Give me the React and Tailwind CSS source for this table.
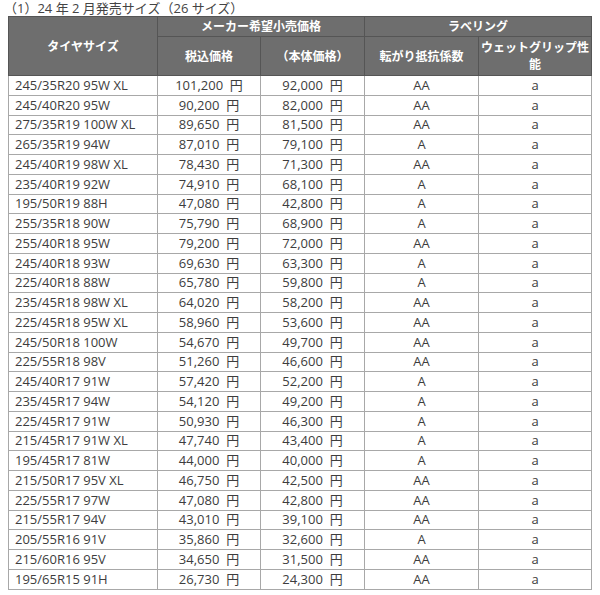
const rows = [
  ['245/35R20 95W XL', '101,200', '92,000', 'AA'],
  ['245/40R20 95W', '90,200', '82,000', 'AA'],
  ['275/35R19 100W XL', '89,650', '81,500', 'AA'],
  ['265/35R19 94W', '87,010', '79,100', 'A'],
  ['245/40R19 98W XL', '78,430', '71,300', 'AA'],
  ['235/40R19 92W', '74,910', '68,100', 'A'],
  ['195/50R19 88H', '47,080', '42,800', 'A'],
  ['255/35R18 90W', '75,790', '68,900', 'A'],
  ['255/40R18 95W', '79,200', '72,000', 'AA'],
  ['245/40R18 93W', '69,630', '63,300', 'A'],
  ['225/40R18 88W', '65,780', '59,800', 'A'],
  ['235/45R18 98W XL', '64,020', '58,200', 'AA'],
  ['225/45R18 95W XL', '58,960', '53,600', 'AA'],
  ['245/50R18 100W', '54,670', '49,700', 'AA'],
  ['225/55R18 98V', '51,260', '46,600', 'AA'],
  ['245/40R17 91W', '57,420', '52,200', 'A'],
  ['235/45R17 94W', '54,120', '49,200', 'A'],
  ['225/45R17 91W', '50,930', '46,300', 'A'],
  ['215/45R17 91W XL', '47,740', '43,400', 'A'],
  ['195/45R17 81W', '44,000', '40,000', 'A'],
  ['215/50R17 95V XL', '46,750', '42,500', 'AA'],
  ['225/55R17 97W', '47,080', '42,800', 'AA'],
  ['215/55R17 94V', '43,010', '39,100', 'AA'],
  ['205/55R16 91V', '35,860', '32,600', 'A'],
  ['215/60R16 95V', '34,650', '31,500', 'AA'],
  ['195/65R15 91H', '26,730', '24,300', 'AA'],
];

const th = 'border border-[#555] bg-[#6e6e6e] px-[2px] text-center text-[12px] font-bold text-white leading-[17px]';
const td = 'border border-[#a8a8a8] text-[#3d3d3d] leading-none';

export default function App() {
  return (
    <div className="min-h-[595px] w-[600px] bg-white text-[13px] font-['Open_Sans','Noto_Sans_CJK_JP',sans-serif]">
      <p className="pl-[4px] pt-[0px] text-[13px] leading-[16px] text-[#444]">（1）24 年 2 月発売サイズ（26 サイズ）</p>
      <table className="ml-[8px] w-[583px] table-fixed border-collapse">
        <colgroup>
          <col className="w-[149px]" />
          <col className="w-[103px]" />
          <col className="w-[104px]" />
          <col className="w-[114px]" />
          <col className="w-[113px]" />
        </colgroup>
        <thead>
          <tr className="h-[20px]">
            <th rowSpan={2} className={th}>タイヤサイズ</th>
            <th colSpan={2} className={th}>メーカー希望小売価格</th>
            <th colSpan={2} className={th}>ラベリング</th>
          </tr>
          <tr className="h-[39px]">
            <th className={th}>税込価格</th>
            <th className={th}>（本体価格）</th>
            <th className={th}>転がり抵抗係数</th>
            <th className={th}>ウェットグリップ性能</th>
          </tr>
        </thead>
        <tbody>
          {rows.map(([size, inc, base, rr]) => (
            <tr key={size} className="h-[19.75px]">
              <td className={`${td} pl-[6px]`}>{size}</td>
              <td className={`${td} text-center`}>{inc}&nbsp;&nbsp;円</td>
              <td className={`${td} text-center`}>{base}&nbsp;&nbsp;円</td>
              <td className={`${td} text-center`}>{rr}</td>
              <td className={`${td} text-center`}>a</td>
            </tr>
          ))}
        </tbody>
      </table>
    </div>
  );
}
